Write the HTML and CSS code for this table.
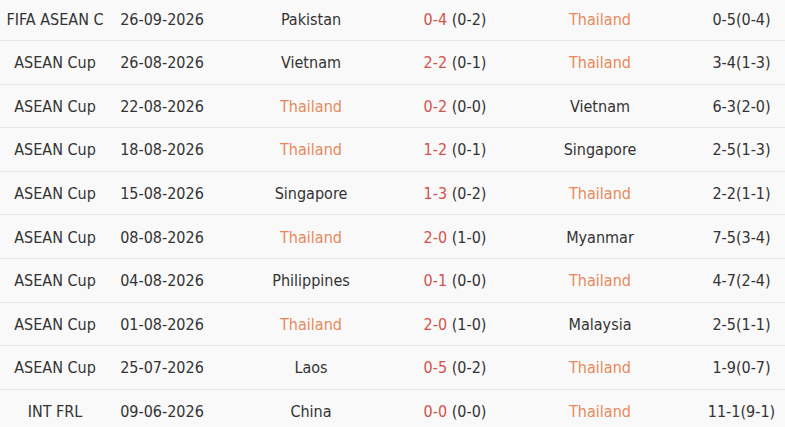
FILE: index.html
```html
<!DOCTYPE html>
<html lang="en">
<head>
    <meta charset="UTF-8">
    <meta name="viewport" content="width=device-width, initial-scale=1.0">
    <title>Thailand - recent matches</title>
    <link rel="stylesheet" href="styles.css">
</head>
<body>
    <table class="matches">
        <colgroup>
            <col class="col-league">
            <col class="col-date">
            <col class="col-home">
            <col class="col-score">
            <col class="col-away">
            <col class="col-corner">
        </colgroup>
        <tbody>
            <tr>
                <td><div class="league">FIFA ASEAN C</div></td>
                <td>26-09-2026</td>
                <td>Pakistan</td>
                <td><span class="ft">0-4</span> (0-2)</td>
                <td class="team-main">Thailand</td>
                <td>0-5(0-4)</td>
            </tr>
            <tr>
                <td><div class="league">ASEAN Cup</div></td>
                <td>26-08-2026</td>
                <td>Vietnam</td>
                <td><span class="ft">2-2</span> (0-1)</td>
                <td class="team-main">Thailand</td>
                <td>3-4(1-3)</td>
            </tr>
            <tr>
                <td><div class="league">ASEAN Cup</div></td>
                <td>22-08-2026</td>
                <td class="team-main">Thailand</td>
                <td><span class="ft">0-2</span> (0-0)</td>
                <td>Vietnam</td>
                <td>6-3(2-0)</td>
            </tr>
            <tr>
                <td><div class="league">ASEAN Cup</div></td>
                <td>18-08-2026</td>
                <td class="team-main">Thailand</td>
                <td><span class="ft">1-2</span> (0-1)</td>
                <td>Singapore</td>
                <td>2-5(1-3)</td>
            </tr>
            <tr>
                <td><div class="league">ASEAN Cup</div></td>
                <td>15-08-2026</td>
                <td>Singapore</td>
                <td><span class="ft">1-3</span> (0-2)</td>
                <td class="team-main">Thailand</td>
                <td>2-2(1-1)</td>
            </tr>
            <tr>
                <td><div class="league">ASEAN Cup</div></td>
                <td>08-08-2026</td>
                <td class="team-main">Thailand</td>
                <td><span class="ft">2-0</span> (1-0)</td>
                <td>Myanmar</td>
                <td>7-5(3-4)</td>
            </tr>
            <tr>
                <td><div class="league">ASEAN Cup</div></td>
                <td>04-08-2026</td>
                <td>Philippines</td>
                <td><span class="ft">0-1</span> (0-0)</td>
                <td class="team-main">Thailand</td>
                <td>4-7(2-4)</td>
            </tr>
            <tr>
                <td><div class="league">ASEAN Cup</div></td>
                <td>01-08-2026</td>
                <td class="team-main">Thailand</td>
                <td><span class="ft">2-0</span> (1-0)</td>
                <td>Malaysia</td>
                <td>2-5(1-1)</td>
            </tr>
            <tr>
                <td><div class="league">ASEAN Cup</div></td>
                <td>25-07-2026</td>
                <td>Laos</td>
                <td><span class="ft">0-5</span> (0-2)</td>
                <td class="team-main">Thailand</td>
                <td>1-9(0-7)</td>
            </tr>
            <tr>
                <td><div class="league">INT FRL</div></td>
                <td>09-06-2026</td>
                <td>China</td>
                <td><span class="ft">0-0</span> (0-0)</td>
                <td class="team-main">Thailand</td>
                <td>11-1(9-1)</td>
            </tr>
        </tbody>
    </table>
</body>
</html>
```

FILE: styles.css
```css
body {
    margin: 0;
    background: #f9f9f9;
    font-family: "DejaVu Sans", Verdana, sans-serif;
    font-stretch: condensed;
    font-size: 16px;
    color: #333;
    overflow: hidden;
}
.matches {
    width: 785px;
    margin-top: -2.6px;
    border-collapse: collapse;
    table-layout: fixed;
}
.col-league { width: 110px; }
.col-date { width: 104px; }
.col-home { width: 194px; }
.col-score { width: 94px; }
.col-away { width: 196px; }
.col-corner { width: 87px; }
.matches td {
    height: 41.6px;
    padding: 1px 4px 0;
    border-bottom: 1px solid #e6e6e6;
    text-align: center;
    white-space: nowrap;
    vertical-align: middle;
}
.league {
    overflow: hidden;
    white-space: nowrap;
}
.team-main {
    color: #e8885a;
}
.ft {
    color: #d4524c;
}
```
